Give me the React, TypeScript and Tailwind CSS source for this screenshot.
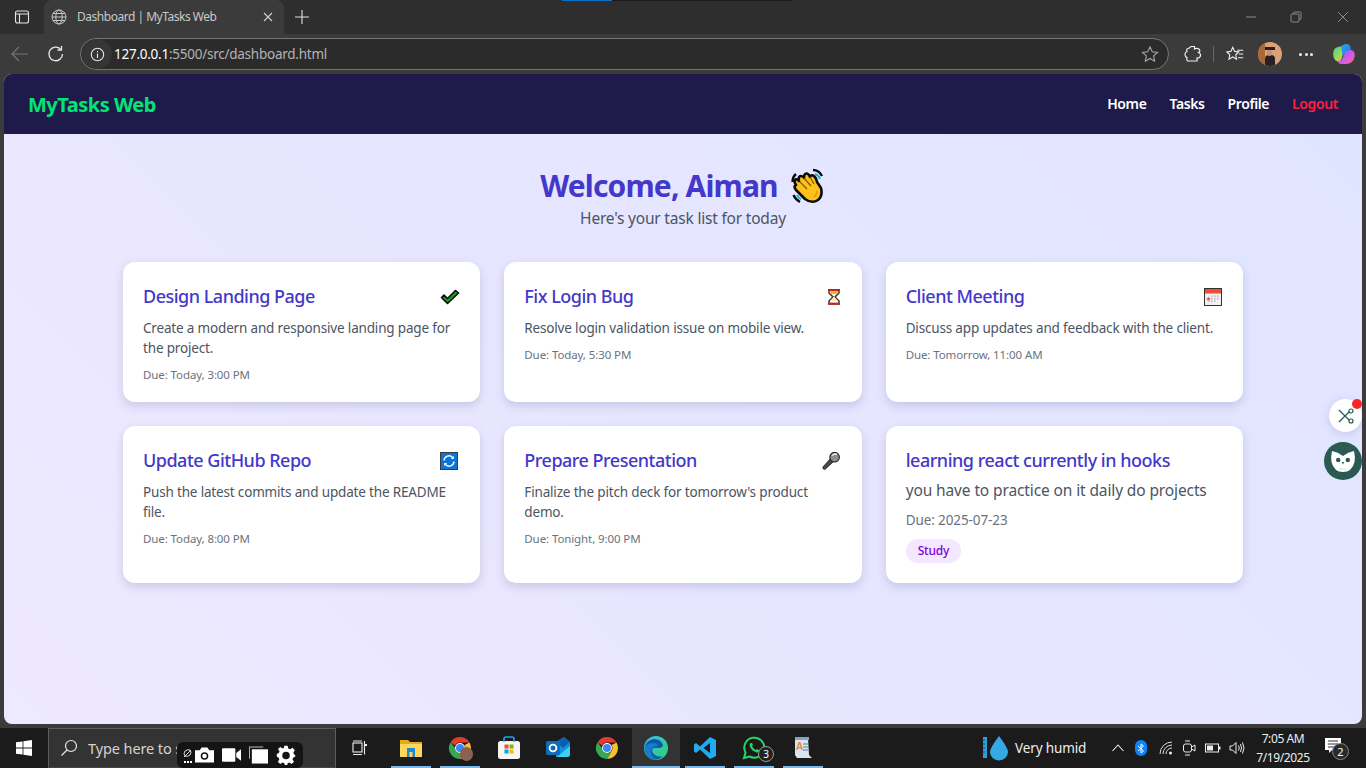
import React from "react";

const font = { fontFamily: '"Noto Sans", "Open Sans", sans-serif' };

function Check() {
  return (
    <svg width="20" height="16" viewBox="0 0 20 16">
      <path d="M1.5 8.5 L4 6 L7.5 9.5 L15.5 1.5 L18.5 4 L7.5 14.5 Z" fill="#16a30f" stroke="#0a0a0a" strokeWidth="1.6" strokeLinejoin="round" />
    </svg>
  );
}
function Hourglass() {
  return (
    <svg width="16" height="18" viewBox="0 0 16 18" className="ml-[4px]">
      <path d="M3 2 H13 V5 L9 9 L13 13 V16 H3 V13 L7 9 L3 5 Z" fill="#fff" stroke="#333" strokeWidth="1.5" />
      <path d="M3.8 3 H12.2 V5 L11 6.2 H5 L3.8 5 Z" fill="#f7b733" />
      <path d="M7.5 9 H8.5 L12 13 H4 Z" fill="#fde9b8" />
      <rect x="2" y="1" width="12" height="1.8" fill="#c81e1e" />
      <rect x="2" y="14.6" width="12" height="2" fill="#d32020" />
    </svg>
  );
}
function Calendar() {
  return (
    <svg width="18" height="18" viewBox="0 0 18 18" className="ml-[1px]">
      <rect x="0.5" y="0.5" width="17" height="17" fill="#f1f1f1" stroke="#333" />
      <rect x="1" y="1" width="16" height="4.5" fill="#ef4b35" />
      <g fill="#b9b9b9">
        <rect x="7" y="7.5" width="1.6" height="1.4" /><rect x="10" y="7.5" width="1.6" height="1.4" /><rect x="13" y="7.5" width="1.6" height="1.4" />
        <rect x="7" y="10" width="1.6" height="1.4" /><rect x="10" y="10" width="1.6" height="1.4" /><rect x="13" y="10" width="1.6" height="1.4" />
        <rect x="4" y="12.5" width="1.6" height="1.4" /><rect x="7" y="12.5" width="1.6" height="1.4" /><rect x="10" y="12.5" width="1.6" height="1.4" />
      </g>
      <path d="M4.5 8.5 L5.2 10 L6.8 10.2 L5.6 11.2 L6 12.8 L4.5 12 L3 12.8 L3.4 11.2 L2.2 10.2 L3.8 10 Z" fill="#e8554a" />
    </svg>
  );
}
function Refresh() {
  return (
    <svg width="18" height="18" viewBox="0 0 18 18">
      <rect x="0.5" y="0.5" width="17" height="17" fill="#0b76d8" stroke="#3a3a3a" />
      <path d="M4 8.4 A5 5 0 0 1 12.6 5.4" fill="none" stroke="#fff" strokeWidth="1.4" />
      <path d="M14 9.6 A5 5 0 0 1 5.4 12.6" fill="none" stroke="#fff" strokeWidth="1.4" />
      <path d="M13.8 4 V7 H10.8 Z" fill="#fff" />
      <path d="M4.2 14 V11 H7.2 Z" fill="#fff" />
    </svg>
  );
}
function Mic() {
  return (
    <svg width="18" height="18" viewBox="0 0 18 18">
      <path d="M1 15 L8.5 6.5 L11.5 9.5 L3.4 17 Q2.2 17.6 1.2 16.8 Q0.6 16 1 15Z" fill="#4a4a4a" stroke="#111" strokeWidth="0.8" />
      <circle cx="12.6" cy="5.2" r="4.8" fill="#8f8f8f" stroke="#222" strokeWidth="1.1" />
      <path d="M10 3.6 Q12 1.4 15 2.2" stroke="#ececec" strokeWidth="1.4" fill="none" />
    </svg>
  );
}
function Wave() {
  return (
    <svg width="36" height="36" viewBox="0 0 36 36">
      <path d="M6 6 Q2.5 9 2.5 14" stroke="#0b0b0b" strokeWidth="2.4" fill="none" />
      <path d="M23 2 Q29 2 32 8" stroke="#0b0b0b" strokeWidth="2.4" fill="none" />
      <path d="M25 6 Q28.5 7 30 11" stroke="#18b7d2" strokeWidth="2" fill="none" />
      <path d="M3.5 27 Q5.5 31.5 10 34" stroke="#0b0b0b" strokeWidth="2.4" fill="none" />
      <path d="M7 27 Q8.5 30 11 31" stroke="#18b7d2" strokeWidth="2" fill="none" />
      <path d="M4.5 14 Q5 10 8 12 L9 13 Q8 8 11 8 Q13 8 14 10 Q14 5 17 5.5 Q19 6 20 9 Q21 6.5 23 7.5 Q26 9 27 14 L31 20 Q33 28 28 32 Q22 36 15 31 L6 22 Q3 18 6 17 Z" fill="#fcc21b" stroke="#0b0b0b" strokeWidth="2.6" strokeLinejoin="round" />
      <path d="M10 14 L17 21 M14 10 L21 18 M20 9 L24 16" stroke="#8a5a00" strokeWidth="1.3" fill="none" />
      <path d="M27 23 Q27 27 24 29" stroke="#e59600" strokeWidth="1.5" fill="none" />
    </svg>
  );
}

type Task = { title: string; desc: string; due: string; icon: React.ReactNode };
const tasks: Task[] = [
  { title: "Design Landing Page", desc: "Create a modern and responsive landing page for the project.", due: "Due: Today, 3:00 PM", icon: <Check /> },
  { title: "Fix Login Bug", desc: "Resolve login validation issue on mobile view.", due: "Due: Today, 5:30 PM", icon: <Hourglass /> },
  { title: "Client Meeting", desc: "Discuss app updates and feedback with the client.", due: "Due: Tomorrow, 11:00 AM", icon: <Calendar /> },
  { title: "Update GitHub Repo", desc: "Push the latest commits and update the README file.", due: "Due: Today, 8:00 PM", icon: <Refresh /> },
  { title: "Prepare Presentation", desc: "Finalize the pitch deck for tomorrow's product demo.", due: "Due: Tonight, 9:00 PM", icon: <Mic /> },
];

function Card({ t }: { t: Task }) {
  return (
    <div className="bg-white rounded-xl shadow-[0_4px_10px_rgba(60,60,120,0.18)] p-5">
      <div className="flex items-center justify-between h-[29px]">
        <h3 className="text-[18px] font-medium text-[#4338ca] tracking-[-0.5px]">{t.title}</h3>
        <div className="w-[20px] flex justify-start">{t.icon}</div>
      </div>
      <p className="mt-[7px] text-[13.5px] leading-[20px] text-[#4b5563] tracking-[-0.17px]">{t.desc}</p>
      <p className="mt-[9px] text-[11.5px] leading-[16px] text-[#6b7280] tracking-[-0.1px]">{t.due}</p>
    </div>
  );
}

function TabBar() {
  return (
    <div className="h-[34px] relative flex items-end bg-[#2e2e2e] shrink-0">
      <div className="absolute left-[562px] top-0 w-[50px] h-px bg-[#0a70c8]" />
      <div className="absolute left-[612px] top-0 w-[180px] h-px bg-[#1a1a1a]" />
      <div className="w-[44px] h-full flex items-center justify-center">
        <svg width="16" height="16" viewBox="0 0 16 16" fill="none" stroke="#e4e4e4" strokeWidth="1.1">
          <rect x="1.5" y="2" width="13" height="12" rx="2" />
          <path d="M1.5 5 H14.5 M5.5 5 V14" />
        </svg>
      </div>
      <div className="w-[240px] h-full bg-[#3b3b3b] rounded-t-lg flex items-center pl-[7px] pr-[11px]">
        <svg width="16" height="16" viewBox="0 0 16 16" fill="none" stroke="#c8c8c8" strokeWidth="1">
          <circle cx="8" cy="8" r="7" /><ellipse cx="8" cy="8" rx="3.2" ry="7" /><path d="M1 8 H15 M2 4.5 H14 M2 11.5 H14" />
        </svg>
        <span className="ml-[10px] flex-1 text-[12px] text-[#c9c9c9] tracking-[-0.48px]">Dashboard | MyTasks Web</span>
        <svg width="10" height="10" viewBox="0 0 10 10" stroke="#d0d0d0" strokeWidth="1.1"><path d="M1 1 L9 9 M9 1 L1 9" /></svg>
      </div>
      <div className="w-[36px] h-full flex items-center justify-center">
        <svg width="14" height="14" viewBox="0 0 14 14" stroke="#e0e0e0" strokeWidth="1.1"><path d="M7 0 V14 M0 7 H14" /></svg>
      </div>
      <div className="flex-1" />
      <div className="flex items-center h-full pr-[17px]">
        <svg width="12" height="12" viewBox="0 0 12 12" stroke="#8a8a8a"><path d="M1 6 H11" /></svg>
        <svg className="ml-[33px]" width="12" height="12" viewBox="0 0 12 12" stroke="#8a8a8a" fill="none"><rect x="1" y="3" width="8" height="8" rx="1" /><path d="M3.5 3 V2 Q3.5 1 4.5 1 H10 Q11 1 11 2 V7.5 Q11 8.5 10 8.5 H9" /></svg>
        <svg className="ml-[35px]" width="12" height="12" viewBox="0 0 12 12" stroke="#8a8a8a"><path d="M1 1 L11 11 M11 1 L1 11" /></svg>
      </div>
    </div>
  );
}

function Toolbar() {
  return (
    <div className="h-[40px] flex items-center bg-[#3b3b3b] shrink-0">
      <div className="w-[40px] flex justify-center">
        <svg width="18" height="16" viewBox="0 0 18 16" fill="none" stroke="#777" strokeWidth="1.2"><path d="M17 8 H1 M8 1 L1 8 L8 15" /></svg>
      </div>
      <div className="w-[32px] flex justify-center">
        <svg width="18" height="18" viewBox="0 0 18 18" fill="none" stroke="#e8e8e8" strokeWidth="1.3"><path d="M15.5 9 A6.8 6.8 0 1 1 13.6 4.2" /><path d="M14.5 1 V5 H10.5" /></svg>
      </div>
      <div className="w-[1089px] ml-2 h-[32px] rounded-full border border-[#767676] bg-[#2b2b2b] flex items-center pr-[9px]">
        <div className="w-[30px] h-[30px] rounded-full bg-[#363636] flex items-center justify-center ml-px">
          <svg width="15" height="15" viewBox="0 0 15 15" fill="none" stroke="#e8e8e8" strokeWidth="1.1"><circle cx="7.5" cy="7.5" r="6.2" /><path d="M7.5 6.5 V11 M7.5 4 V5.2" /></svg>
        </div>
        <span className="ml-[2px] flex-1 text-[13.5px] text-white tracking-[-0.25px]">127.0.0.1<span className="text-[#b4b4b4]">:5500/src/dashboard.html</span></span>
        <svg width="18" height="18" viewBox="0 0 24 24" fill="none" stroke="#a8a8a8" strokeWidth="1.5"><path d="M12 2.5 L15 9 L22 9.8 L16.8 14.5 L18.2 21.5 L12 18 L5.8 21.5 L7.2 14.5 L2 9.8 L9 9 Z" /></svg>
      </div>
      <div className="w-[40px] flex justify-center ml-[4px]">
        <svg width="18" height="18" viewBox="0 0 18 18" fill="none" stroke="#eee" strokeWidth="1.2"><path d="M7 1.5 H10.5 V4 Q13 2.5 15.5 4.5 Q16.5 6.5 14.5 7.5 Q17 8.5 16.5 11 Q15.5 13.5 13 13 V16 H3.5 Q2 14 3 12.5 Q1 12 1 9.5 Q1 7 3 6.5 Q2 4 4 3.5 Q6 3 7 1.5 Z" /></svg>
      </div>
      <div className="w-px h-4 bg-[#6a6a6a]" />
      <div className="w-[41px] flex justify-center">
        <svg width="18" height="18" viewBox="0 0 24 24" fill="none" stroke="#eee" strokeWidth="1.5"><path d="M9 3 L11.5 8.5 L17 9.2 L13 13 L14 19 L9 16 L4 19 L5 13 L1 9.2 L6.5 8.5 Z" /><path d="M15 7 H23 M17 12 H23 M16 17 H23" /></svg>
      </div>
      <div className="w-[24px] h-[24px] rounded-full bg-[#d9a27a] overflow-hidden ml-[3px] relative">
        <div className="absolute left-0 top-0 w-[7px] h-[24px] bg-[#a8683a]" />
        <div className="absolute left-[7px] top-[5px] w-[10px] h-[3px] bg-[#2a2024]" />
        <div className="absolute left-[7px] top-[13px] w-[10px] h-[11px] bg-[#2a2024] rounded-t" />
        <div className="absolute left-[9px] top-[8px] w-[5px] h-[6px] bg-[#c98f74] rounded-full" />
      </div>
      <div className="w-[48px] flex justify-center gap-[2.5px]">
        <span className="w-[3px] h-[3px] rounded-full bg-[#eee]" />
        <span className="w-[3px] h-[3px] rounded-full bg-[#eee]" />
        <span className="w-[3px] h-[3px] rounded-full bg-[#eee]" />
      </div>
      <svg width="24" height="22" viewBox="0 0 24 22" className="ml-[2px]">
        <defs>
          <linearGradient id="cpa" x1="0" y1="0" x2="1" y2="1"><stop offset="0" stopColor="#1fb6e8" /><stop offset="1" stopColor="#2a5fe8" /></linearGradient>
          <linearGradient id="cpb" x1="0" y1="0" x2="1" y2="1"><stop offset="0" stopColor="#7a5cf0" /><stop offset="0.6" stopColor="#d65ce0" /><stop offset="1" stopColor="#f5647a" /></linearGradient>
          <linearGradient id="cpc" x1="0" y1="0" x2="1" y2="1"><stop offset="0" stopColor="#3fd0a0" /><stop offset="0.6" stopColor="#a8d94a" /><stop offset="1" stopColor="#f6a93b" /></linearGradient>
        </defs>
        <path d="M1.5 14 Q0.5 9 2.5 6 Q4.5 3.5 9 3.5 L13 4 L9.5 16 Q8 20 4.5 18 Q2.5 17 1.5 14 Z" fill="url(#cpc)" />
        <path d="M9 3.5 Q11.5 0.5 15.5 1 Q18 1.5 19 5.5 L14 14 L10.5 12 Z" fill="url(#cpa)" />
        <path d="M13.5 8.5 Q16 6.5 20 7 Q23.5 9 22.5 14 Q21.5 20 15 21 L8.5 21 Q6 20.5 5.5 18 Q9.5 18.5 11 14 Z" fill="url(#cpb)" />
      </svg>
    </div>
  );
}

function Page() {
  return (
    <div className="relative flex-1 mx-1 rounded-lg overflow-hidden flex flex-col bg-[linear-gradient(45deg,#eee9fe_0%,#e8e6ff_40%,#e0e5ff_100%)]">
      <nav className="h-[60px] shrink-0 bg-[#1e1b4b] flex items-center justify-between px-6">
        <span className="mt-[2px] text-[20px] font-bold text-[#00e676] tracking-[-0.5px]">MyTasks Web</span>
        <div className="mb-[2px] flex items-center gap-[23px] text-[14px] font-semibold text-white tracking-[-0.4px]">
          <a>Home</a>
          <a>Tasks</a>
          <a>Profile</a>
          <a className="text-[#ff1f3d]">Logout</a>
        </div>
      </nav>
      <div className="flex flex-col items-center pt-[32px]">
        <h1 className="flex items-center text-[30px] leading-[40px] font-bold text-[#4338ca] tracking-[-0.85px]">
          Welcome, Aiman
          <span className="ml-[12px]"><Wave /></span>
        </h1>
        <p className="text-[15.5px] leading-[24px] text-[#4b5563] tracking-[-0.2px]">Here's your task list for today</p>
      </div>
      <div className="w-[1120px] mx-auto mt-[32px] grid grid-cols-3 gap-6 grid-rows-[140px_157px]">
        {tasks.map((t) => <Card key={t.title} t={t} />)}
        <div className="bg-white rounded-xl shadow-[0_4px_10px_rgba(60,60,120,0.18)] p-5">
          <h3 className="h-[29px] flex items-center text-[18px] font-medium text-[#4338ca] tracking-[-0.48px]">learning react currently in hooks</h3>
          <p className="mt-[3px] text-[15.5px] leading-[24px] text-[#4b5563] tracking-[-0.12px]">you have to practice on it daily do projects</p>
          <p className="mt-2 text-[13.5px] leading-[20px] text-[#6b7280] tracking-[-0.1px]">Due: 2025-07-23</p>
          <span className="inline-block mt-[9px] px-3 h-6 leading-6 rounded-full bg-[#f3e8ff] text-[#7e00d6] text-[12px] font-medium tracking-[-0.2px]">Study</span>
        </div>
      </div>
      <div className="absolute right-0 top-[325px] w-[33px] h-[33px] rounded-full bg-white shadow-[0_2px_10px_rgba(80,80,140,0.2)] flex items-center justify-center">
        <svg width="16" height="16" viewBox="0 0 16 16" fill="none" stroke="#27564d" strokeWidth="1.2"><path d="M1 2 L11 12 M1 14 L11 4" /><circle cx="13" cy="3" r="2" /><circle cx="13" cy="13" r="2" /></svg>
        <span className="absolute right-0 top-0 w-[10px] h-[10px] rounded-full bg-[#f9272c]" />
      </div>
      <div className="absolute right-0 top-[368px] w-[38px] h-[38px] rounded-full bg-[#2a5a51] flex items-center justify-center">
        <svg width="26" height="24" viewBox="0 0 26 24">
          <path d="M2 2 Q8 3 13 7 Q18 3 24 2 Q25.5 8 24.5 13 Q22 23 13 23 Q4 23 1.5 13 Q0.5 8 2 2Z" fill="#fff" />
          <circle cx="8.2" cy="11" r="2.2" fill="#2a5a51" />
          <circle cx="17.8" cy="11" r="2.2" fill="#2a5a51" />
          <path d="M11.8 13 L13 15.5 L14.2 13 Z" fill="#2a5a51" />
          <path d="M9 20 H17" stroke="#cfdcd9" strokeWidth="0.8" />
        </svg>
      </div>
    </div>
  );
}

function Underlined({ w, children, active }: { w: string; children: React.ReactNode; active?: boolean }) {
  return (
    <div className={`${w} h-full relative flex items-center justify-center ${active ? "bg-[#333333]" : ""}`}>
      {children}
      <div className="absolute bottom-0 inset-x-0 h-[2px] bg-[#76b9ed]" />
    </div>
  );
}

function Chrome({ size = 24 }: { size?: number }) {
  return (
    <svg width={size} height={size} viewBox="0 0 24 24">
      <path d="M12 1 A11 11 0 0 1 21.5 6.5 H12 A5.5 5.5 0 0 0 7 9.5 L2.6 6.2 A11 11 0 0 1 12 1" fill="#e33b2e" />
      <path d="M21.5 6.5 A11 11 0 0 1 12 23 L16.7 14.8 A5.5 5.5 0 0 0 16.5 9 Z" fill="#fbc02d" />
      <path d="M2.6 6.2 A11 11 0 0 0 12 23 L16.7 14.8 A5.5 5.5 0 0 1 7 12 Z" fill="#34a853" />
      <circle cx="12" cy="12" r="5" fill="#fff" />
      <circle cx="12" cy="12" r="4" fill="#4285f4" />
    </svg>
  );
}

function Taskbar() {
  return (
    <div className="h-[40px] shrink-0 bg-[#1b1b1b] flex items-center relative">
      <div className="w-[48px] flex justify-center">
        <svg width="16" height="16" viewBox="0 0 16 16" fill="#fff"><path d="M0 2.3 L6.6 1.4 V7.6 H0 Z M7.4 1.3 L16 0 V7.6 H7.4 Z M0 8.4 H6.6 V14.6 L0 13.7 Z M7.4 8.4 H16 V16 L7.4 14.7 Z" /></svg>
      </div>
      <div className="w-[288px] h-full bg-[#333333] border border-[#5e5e5e] border-b-[#444] flex items-center pl-[11px] text-[#d0d0d0]">
        <svg width="18" height="18" viewBox="0 0 18 18" fill="none" stroke="#e8e8e8" strokeWidth="1.2"><circle cx="11" cy="7" r="5.5" /><path d="M7 11 L1.5 16.5" /></svg>
        <span className="ml-[10px] mt-[2px] text-[14.5px] text-[#d4d4d4] tracking-[-0.1px] whitespace-nowrap">Type here to s</span>
      </div>
      <div className="w-[48px] flex justify-center">
        <svg width="16" height="16" viewBox="0 0 16 16" fill="none" stroke="#eee" strokeWidth="1.1"><rect x="1" y="3" width="9" height="9" /><path d="M1 1 H10 M1 14.5 H10 M12.5 1 V14.5" /><rect x="12.5" y="4" width="2.5" height="2" fill="#eee" stroke="none" /></svg>
      </div>
      <div className="flex items-center h-full ml-[7px]">
        <Underlined w="w-[40px]">
          <svg width="22" height="20" viewBox="0 0 22 20"><path d="M0 2 H8 L10 4 H22 V18 H0 Z" fill="#e8a91c" /><path d="M0 6 H22 V19 H0Z" fill="#ffd65c" /><path d="M7 10 H15 V19 H12.5 V14 H9.5 V19 H7 Z" fill="#1e88d8" /></svg>
        </Underlined>
        <div className="w-[9px]" />
        <Underlined w="w-[40px]">
          <div className="relative"><Chrome />
            <div className="absolute left-[12px] top-[11px] w-[13px] h-[14px] rounded-full bg-[#8a6350]" />
          </div>
        </Underlined>
        <div className="w-[9px]" />
        <div className="w-[40px] h-full flex items-center justify-center">
          <svg width="24" height="24" viewBox="0 0 24 24"><rect x="1" y="5" width="22" height="18" rx="2.5" fill="#f5f5f5" /><path d="M7 6 V3 Q7 1 9 1 H15 Q17 1 17 3 V6" fill="none" stroke="#22a7e8" strokeWidth="1.6" /><rect x="7.5" y="8.5" width="4" height="4" fill="#f25022" /><rect x="12.5" y="8.5" width="4" height="4" fill="#7fba00" /><rect x="7.5" y="13.5" width="4" height="4" fill="#00a4ef" /><rect x="12.5" y="13.5" width="4" height="4" fill="#ffb900" /></svg>
        </div>
        <div className="w-[9px]" />
        <div className="w-[40px] h-full flex items-center justify-center">
          <svg width="24" height="24" viewBox="0 0 24 24"><path d="M10 6 L18 1 L24 6 V18 Q24 21 21 21 H10 Z" fill="#1490df" /><path d="M10 6 L18 1 L24 6 L17 12Z" fill="#0a5fb0" /><path d="M11 21 L24 10 V18 Q24 21 21 21 Z" fill="#3dd0f5" /><rect x="0" y="5" width="14" height="14" rx="1.5" fill="#0f6cbd" /><circle cx="7" cy="12" r="3.4" fill="none" stroke="#fff" strokeWidth="1.8" /></svg>
        </div>
        <div className="w-[9px]" />
        <div className="w-[40px] h-full flex items-center justify-center"><Chrome /></div>
        <div className="w-[5px]" />
        <Underlined w="w-[48px]" active>
          <svg width="24" height="24" viewBox="0 0 24 24"><defs><linearGradient id="edge" x1="0" y1="0" x2="1" y2="1"><stop offset="0" stopColor="#35c1f1" /><stop offset="1" stopColor="#2fcf6f" /></linearGradient></defs><circle cx="12" cy="12" r="12" fill="url(#edge)" /><path d="M0.5 12 Q2 4 10 3 Q17 3 19 9 Q19 12 14 12 Q9 11 8 14 Q8 18 13 20 Q16 21 19 20 Q15 24 10 23.5 Q1 21 0.5 12Z" fill="#0c59a4" /><path d="M0.5 12 Q3 7 9 7 Q14 7 14 10 Q8 10 7 15 Q7 20 12 23 Q1 22 0.5 12Z" fill="#1a7ad0" /></svg>
        </Underlined>
        <div className="w-[5px]" />
        <Underlined w="w-[40px]">
          <svg width="24" height="24" viewBox="0 0 24 24"><path d="M17 1 L23 4 V20 L17 23 L7 13.5 L3 17 L1 15.5 V8.5 L3 7 L7 10.5 Z M17 7 L10.5 12 L17 17 Z" fill="#23a9f2" fillRule="evenodd" /></svg>
        </Underlined>
        <div className="w-[9px]" />
        <Underlined w="w-[40px]">
          <div className="relative">
            <svg width="24" height="24" viewBox="0 0 24 24" fill="none"><path d="M2 22 L3.5 16.5 A10 10 0 1 1 7.5 20.5 Z" stroke="#25d366" strokeWidth="2" /><path d="M8.5 7 Q7 8.5 8 11 Q10 15 14.5 16.5 Q17 17 17.5 14.5 L15 13 L14 14 Q11.5 13 10 10 L11 9 L10 7 Z" fill="#25d366" /></svg>
            <span className="absolute left-[16px] top-[10px] w-[16px] h-[16px] rounded-full bg-[#222] border border-[#999] text-[10px] leading-[14px] text-center text-white">3</span>
          </div>
        </Underlined>
        <div className="w-[9px]" />
        <Underlined w="w-[40px]">
          <svg width="20" height="24" viewBox="0 0 20 24"><path d="M2 2 H15 L16 19 L19 22 H4 L2 19 Z" fill="#d8e4ee" /><rect x="2" y="1" width="14" height="3" fill="#7fa6c7" /><text x="3" y="14" fontSize="10" fontWeight="700" fill="#f08030" fontFamily="Liberation Sans">A</text><path d="M10 8 H15 M10 11 H15 M10 14 H15" stroke="#4f7fb0" /></svg>
        </Underlined>
      </div>
      <div className="flex-1" />
      <div className="flex items-center h-full text-white">
        <svg width="25" height="26" viewBox="0 0 25 26"><rect x="0" y="2" width="4" height="21" fill="#2f9fd8" /><path d="M0 5 H2 M0 9 H2 M0 13 H2 M0 17 H2" stroke="#0f4f78" /><path d="M16 1 Q25 13 25 17 A9 8.5 0 0 1 7 17 Q7 13 16 1Z" fill="#35a9e6" /></svg>
        <span className="ml-[7px] text-[13.5px] text-[#eee] tracking-[-0.13px] w-[97px] whitespace-nowrap">Very humid</span>
        <svg width="12" height="8" viewBox="0 0 12 8" fill="none" stroke="#eee" strokeWidth="1.1"><path d="M0.5 7 L6 1 L11.5 7" /></svg>
        <div className="ml-[11px] w-[12px] h-[16px] rounded-full bg-[#0a84ff] flex items-center justify-center">
          <svg width="8" height="11" viewBox="0 0 8 11" fill="none" stroke="#fff"><path d="M1 3 L6.5 8 L4 10 V1 L6.5 3 L1 8" /></svg>
        </div>
        <svg className="ml-[12px]" width="14" height="14" viewBox="0 0 14 14" fill="none" stroke="#ddd"><path d="M1 13 A12 12 0 0 1 13 1 M4 13 A9 9 0 0 1 13 4 M7 13 A6 6 0 0 1 13 7" /><circle cx="11.5" cy="12" r="1.5" fill="#eee" stroke="none" /></svg>
        <svg className="ml-[9px]" width="14" height="16" viewBox="0 0 14 16" fill="none" stroke="#eee"><rect x="1.5" y="4" width="8" height="8" rx="2" /><path d="M9.5 7 L13 5 V11 L9.5 9 M3 1 H8 M3 15 H8" /></svg>
        <svg className="ml-[9px]" width="16" height="10" viewBox="0 0 16 10" fill="none" stroke="#eee"><rect x="0.5" y="1" width="13" height="8" /><rect x="2" y="2.5" width="6" height="5" fill="#eee" stroke="none" /><rect x="14" y="3.5" width="1.5" height="3" fill="#eee" stroke="none" /></svg>
        <svg className="ml-[8px]" width="17" height="14" viewBox="0 0 17 14" fill="none" stroke="#eee"><path d="M1 5 H3.5 L7 1.5 V12.5 L3.5 9 H1 Z M9.5 4.5 Q11 7 9.5 9.5 M11.5 3 Q13.5 7 11.5 11 M13.5 1.5 Q16.5 7 13.5 12.5" /></svg>
        <div className="ml-[8px] w-[58px] text-center text-[12px] leading-[19px] text-[#eee] tracking-[-0.4px]">
          <div>7:05 AM</div>
          <div>7/19/2025</div>
        </div>
        <div className="relative ml-[13px] mr-[23px] w-[18px] h-[24px]">
          <svg width="16" height="15" viewBox="0 0 16 15" className="mt-[2px]"><path d="M0 0 H16 V12 H7 L4 15 V12 H0 Z" fill="#fff" /><path d="M3 3 H13 M3 6 H13 M3 9 H13" stroke="#333" /></svg>
          <span className="absolute left-[7px] top-[7px] w-[17px] h-[17px] rounded-full bg-[#2a2a2a] border border-[#888] text-[11px] leading-[15px] text-center text-white">2</span>
        </div>
      </div>
      <div className="absolute left-[177px] top-[14px] w-[126px] h-[26px] rounded-md bg-[#141414] flex items-center text-white">
        <div className="w-[17px] pl-[4px] flex flex-col items-center">
          <svg width="11" height="11" viewBox="0 0 11 11" fill="none" stroke="#ddd"><path d="M2 9 L9 2 M3 3 Q6 1 8 2 Q10 4 8 7 Q6 9 3 8 Q1 6 3 3Z" /></svg>
          <div className="flex gap-px mt-[2px]"><span className="w-[2px] h-[2px] bg-white" /><span className="w-[2px] h-[2px] bg-white" /><span className="w-[2px] h-[2px] bg-white" /></div>
        </div>
        <svg className="ml-[1px]" width="19" height="16" viewBox="0 0 20 16"><path fillRule="evenodd" d="M0 3 H5 L7 0 H13 L15 3 H20 V16 H0 Z M10 5 A4 4 0 1 0 10 13 A4 4 0 1 0 10 5Z" fill="#fff" /><circle cx="10" cy="9" r="2.4" fill="#fff" /></svg>
        <svg className="ml-[8px]" width="19" height="14" viewBox="0 0 20 14" fill="#fff"><rect x="0" y="0" width="14" height="14" rx="1" /><path d="M15 5 L20 1 V13 L15 9 Z" /></svg>
        <svg className="ml-[8px]" width="19" height="18" viewBox="0 0 20 18" fill="#fff"><path d="M0 0 H15 V1 H1 V13 H0 Z" fill="#bbb" /><rect x="3" y="3" width="17" height="15" /></svg>
        <svg className="ml-[8px]" width="20" height="20" viewBox="0 0 24 24" fill="#fff"><path fillRule="evenodd" d="M10 1 H14 L14.7 4.2 L17 5.2 L19.8 3.4 L22.6 6.2 L20.8 9 L21.8 11.3 L23 12 V14 L20.8 15 L19.8 17.3 L21.6 20.1 L18.8 22.9 L16 21.1 L14 22 L13.5 24 H10.5 L10 22 L7.8 21.1 L5 22.9 L2.2 20.1 L4 17.3 L3 15 L1 14 V10.5 L3.2 9.8 L4.2 7.5 L2.4 4.7 L5.2 2.4 L8 4.2 L9.4 3.6 Z M12 8 A4.5 4.5 0 1 0 12 17 A4.5 4.5 0 1 0 12 8Z" /></svg>
      </div>
    </div>
  );
}

export default function App() {
  return (
    <div className="h-screen w-screen overflow-hidden flex flex-col bg-[#3b3b3b]" style={font}>
      <TabBar />
      <Toolbar />
      <Page />
      <div className="h-[4px] shrink-0" />
      <Taskbar />
    </div>
  );
}
